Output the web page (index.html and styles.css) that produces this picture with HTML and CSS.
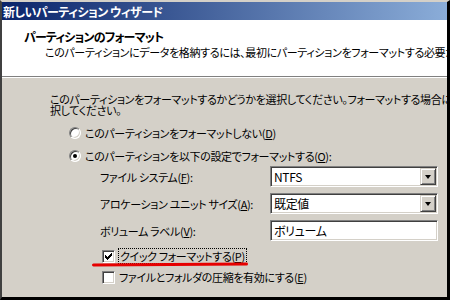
FILE: index.html
```html
<!DOCTYPE html>
<html lang="ja">
<head>
<meta charset="utf-8">
<link rel="stylesheet" href="styles.css">
</head>
<body>
<div class="window">
  <div class="titlebar"><span class="title">新しいパーティション ウィザード</span></div>
  <div class="header">
    <div class="h-title">パーティションのフォーマット</div>
    <div class="h-sub">このパーティションにデータを格納するには、最初にパーティションをフォーマットする必要があります。</div>
  </div>
  <div class="content">
    <div class="intro">
      <div class="line">このパーティションをフォーマットするかどうかを選択してください。フォーマットする場合には、使用する設定を選</div>
      <div class="line">択してください。</div>
    </div>
    <div class="radio-row first">
      <span class="radio"></span>
      <span class="label">このパーティションをフォーマットしない(<u>D</u>)</span>
    </div>
    <div class="radio-row second">
      <span class="radio checked"></span>
      <span class="label">このパーティションを以下の設定でフォーマットする(<u>O</u>):</span>
    </div>
    <div class="fields">
      <span class="f-label">ファイル システム(<u>F</u>):</span>
      <div class="combo"><span class="value">NTFS</span><span class="drop"><span class="tri"></span></span></div>
      <span class="f-label">アロケーション ユニット サイズ(<u>A</u>):</span>
      <div class="combo"><span class="value">既定値</span><span class="drop"><span class="tri"></span></span></div>
      <span class="f-label">ボリューム ラベル(<u>V</u>):</span>
      <div class="combo edit"><span class="value">ボリューム</span></div>
    </div>
    <div class="check-row first">
      <span class="checkbox"><svg width="7" height="7" viewBox="0 0 7 7"><path d="M0 2h1v1h1v1h1v-1h1v-1h1v-1h1v-1h1v3h-1v1h-1v1h-1v1h-1v1h-1v-1h-1v-1h-1z" fill="#000"/></svg></span>
      <span class="label focus">クイック フォーマットする(<u>P</u>)</span>
      <span class="redline"></span>
    </div>
    <div class="check-row second">
      <span class="checkbox"></span>
      <span class="label">ファイルとフォルダの圧縮を有効にする(<u>E</u>)</span>
    </div>
  </div>
</div>
</body>
</html>
```

FILE: styles.css
```css
* { box-sizing: border-box; }
html, body { margin: 0; padding: 0; }
body {
  width: 450px;
  height: 300px;
  overflow: hidden;
  background: #d4d0c8;
  font-family: "Noto Sans CJK JP", "Noto Sans", sans-serif;
  font-size: 11px;
  letter-spacing: -0.35px;
  font-feature-settings: "palt";
  color: #000;
}
.window {
  width: 450px;
  height: 300px;
  overflow: hidden;
  display: flex;
  flex-direction: column;
  border-top: 2px solid #d4d0c8;
  border-left: 2px solid #404040;
  border-right: 3px solid #000;
  border-bottom: 3px solid #000;
  background: #d4d0c8;
}
.titlebar {
  height: 18px;
  flex: none;
  background: linear-gradient(to right, #0a246a 0px, #a6caf0 540px);
  color: #fff;
  font-size: 12px;
  font-weight: 700;
  letter-spacing: -0.5px;
  display: flex;
  align-items: center;
  padding-left: 1px;
  white-space: nowrap;
}
.header {
  height: 57px;
  flex: none;
  background: #fff;
  border-bottom: 1px solid #808080;
  box-shadow: 0 1px 0 #fff;
  padding: 10px 0 0 22px;
  white-space: nowrap;
  overflow: hidden;
  line-height: 14px;
}
.h-title { font-weight: 700; font-size: 12px; letter-spacing: -0.8px; }
.h-sub { padding-left: 21px; margin-top: 1px; }
.content {
  flex: 1;
  display: flex;
  flex-direction: column;
  margin-top: 1px;
  white-space: nowrap;
  overflow: hidden;
}
.intro {
  padding: 16px 0 0 48px;
}
.line { height: 11px; line-height: 11px; }
.radio-row {
  display: flex;
  align-items: center;
  gap: 4px;
  height: 16px;
  padding-left: 67px;
}
.radio-row.first { margin-top: 9px; }
.radio-row.second { margin-top: 7px; }
.radio {
  width: 12px;
  height: 12px;
  border-radius: 50%;
  background: #fff;
  border: 1px solid;
  border-color: #808080 #fff #fff #808080;
  box-shadow: inset 1px 1px 0 #404040, inset -1px -1px 0 #d4d0c8;
  display: flex;
  align-items: center;
  justify-content: center;
  flex: none;
}
.radio.checked::after {
  content: "";
  width: 4px;
  height: 4px;
  border-radius: 50%;
  background: #000;
}
.fields {
  display: grid;
  grid-template-columns: 170px 168px;
  grid-auto-rows: 21px;
  row-gap: 6px;
  align-items: center;
  padding-left: 98px;
  margin-top: 2px;
}
.combo {
  height: 21px;
  display: flex;
  align-items: center;
  background: #fff;
  border: 1px solid;
  border-color: #808080 #fff #fff #808080;
  box-shadow: inset 1px 1px 0 #404040, inset -1px -1px 0 #d4d0c8;
  padding: 2px 2px 2px 3px;
  font-size: 12px;
}
.combo .value { flex: 1; }
.drop {
  width: 16px;
  height: 17px;
  margin-right: -1px;
  background: #d4d0c8;
  border: 1px solid;
  border-color: #d4d0c8 #404040 #404040 #d4d0c8;
  box-shadow: inset 1px 1px 0 #fff, inset -1px -1px 0 #808080;
  display: flex;
  align-items: center;
  justify-content: center;
}
.tri {
  width: 0;
  height: 0;
  border-left: 3.5px solid transparent;
  border-right: 3.5px solid transparent;
  border-top: 4px solid #000;
}
.check-row {
  position: relative;
  display: flex;
  align-items: center;
  gap: 4px;
  height: 16px;
  padding-left: 100px;
}
.check-row.first { margin-top: 7px; }
.check-row.second { margin-top: 5px; }
.checkbox {
  width: 13px;
  height: 13px;
  flex: none;
  background: #fff;
  border: 1px solid;
  border-color: #808080 #fff #fff #808080;
  box-shadow: inset 1px 1px 0 #404040, inset -1px -1px 0 #d4d0c8;
  display: flex;
  align-items: center;
  justify-content: center;
}
.checkbox svg { display: block; }
.label.focus {
  outline: 1px dotted #000;
  padding: 0 1px;
  line-height: 14px;
}
.redline {
  position: absolute;
  left: 90px;
  top: 15px;
  width: 156px;
  height: 3px;
  background: #e60000;
  border-radius: 2px;
  transform: rotate(-0.4deg);
}
u { text-decoration: underline; text-underline-offset: 1px; }
```
